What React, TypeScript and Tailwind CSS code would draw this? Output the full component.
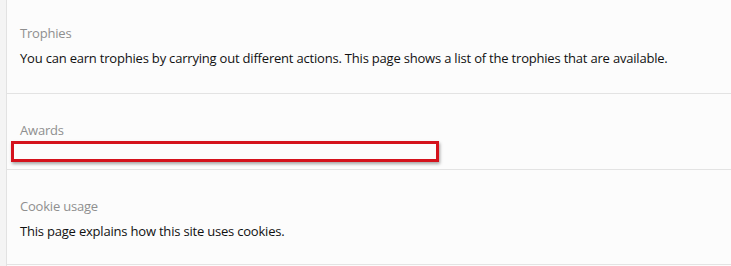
import React from "react";

function Section({ title, children }: { title: string; children?: React.ReactNode }) {
  return (
    <div className="border-b border-[#e3e3e3] pl-[13px] pt-[26px]">
      <div className="text-[13px] leading-[20px] tracking-[-0.2px] text-[#8f8f8f]">{title}</div>
      {children}
    </div>
  );
}

export default function App() {
  return (
    <div className="flex h-[266px] w-[731px] overflow-hidden bg-[#fcfcfc]" style={{ fontFamily: '"Open Sans", "Noto Sans", sans-serif' }}>
      <div className="w-[7px] shrink-0 border-r border-[#e2e2e2] bg-[#f4f4f4]" />
      <div className="flex-1 -mt-[3px]">
        <Section title="Trophies">
          <div className="mt-[5px] pb-[25px] text-[13px] leading-[20px] tracking-[-0.2px] text-[#111111]">
            You can earn trophies by carrying out different actions. This page shows a list of the trophies that are available.
          </div>
        </Section>
        <Section title="Awards">
          <div className="pb-[7px] pt-[1px] -ml-[9px]">
            <div className="h-[21px] w-[428px] border-[3px] border-[#d4121c] shadow-[1px_2px_3px_rgba(0,0,0,0.35)]" />
          </div>
        </Section>
        <Section title="Cookie usage">
          <div className="mt-[5px] pb-[23px] text-[13px] leading-[20px] tracking-[-0.2px] text-[#111111]">
            This page explains how this site uses cookies.
          </div>
        </Section>
      </div>
    </div>
  );
}
